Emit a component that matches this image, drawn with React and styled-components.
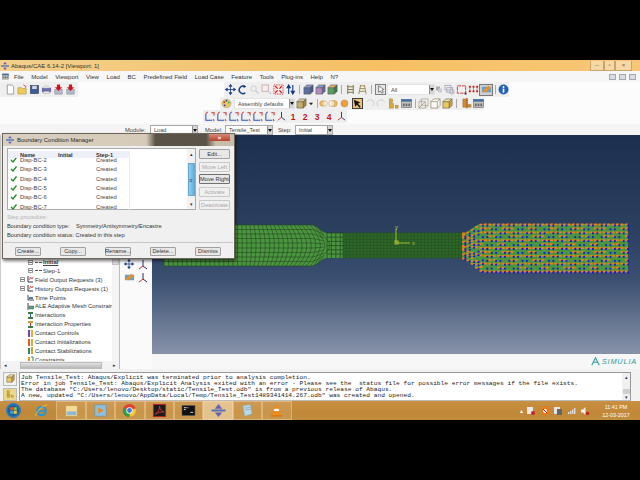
import React from 'react'
import styled, { createGlobalStyle } from 'styled-components'

const Global = createGlobalStyle`
    html, body { margin: 0; padding: 0; background: #000; }
    * { box-sizing: border-box; }
    body { font-family: "Liberation Sans", Arial, sans-serif; font-size: 6px; color: #222; }
`

const Page = styled.div`
    width: 640px;
    height: 480px;
    background: #000;
    padding: 60px 0;
    overflow: hidden;
`
const AppWindow = styled.div`
    position: relative;
    height: 360px;
    display: flex;
    flex-direction: column;
    background: #f2f2f2;
`
const TitleBar = styled.div`
    height: 11px;
    display: flex;
    align-items: center;
    gap: 2px;
    padding-left: 1px;
    background: linear-gradient(90deg, #f4d08c 0%, #f3c574 35%, #f6bf62 60%, #f8c878 100%);
    font-size: 6px;
    color: #3a3020;
`
const Caption = styled.span`
    flex: 1;
`
const CaptionButtons = styled.div`
    display: flex;
    margin-right: 8px;
    height: 10px;
`
const CaptionButton = styled.div`
    width: ${p => p.$w}px;
    border: 1px solid #c9a468;
    border-top: 0;
    background: #f5d8a5;
    display: flex;
    align-items: center;
    justify-content: center;
    color: #6a5a40;
    font-size: 6px;
    line-height: 1;
`
const MenuBar = styled.div`
    height: 11px;
    display: flex;
    align-items: center;
    background: #f6f6f6;
    padding: 0 4px 0 2px;
`
const MenuItems = styled.div`
    flex: 1;
    display: flex;
    gap: 7.6px;
    margin-left: 5px;
    color: #333;
`
const MdiButton = styled.div`
    width: 7px;
    height: 6px;
    margin-left: 3px;
    background: #d8dce4;
    border: 1px solid #a4a8b0;
`
const ToolArea = styled.div`
    height: 41px;
    background: #fcfcfc;
`
const ToolRow = styled.div`
    display: flex;
    height: ${p => p.$h}px;
    align-items: center;
`
const Group = styled.div`
    display: flex;
    align-items: center;
    height: 100%;
    margin-left: ${p => p.$ml || 0}px;
    padding-left: ${p => p.$pl || 0}px;
    padding-right: ${p => p.$pr || 0}px;
    background: #efefef;
`
const Tool = styled.div`
    width: ${p => p.$w || 12}px;
    height: 12px;
    flex: none;
    display: flex;
    align-items: center;
    justify-content: center;
    color: #c11;
    font-size: 8.5px;
    font-weight: bold;
    ${p => p.$on && 'background: #cfcfcf; border: 1px solid #777;'}
`
const Sep = styled.div`
    width: ${p => p.$w || 6}px;
    height: 9px;
    flex: none;
    background: linear-gradient(#aaa, #aaa) center / 1px 100% no-repeat;
`
const Combo = styled.div`
    width: ${p => p.$w}px;
    height: ${p => p.$h || 10}px;
    margin-left: ${p => p.$ml || 0}px;
    flex: none;
    display: flex;
    align-items: center;
    justify-content: space-between;
    padding-left: 3px;
    background: #fff;
    border: 1px solid ${p => p.$line || '#e4e4e4'};
    color: #444;
    font-size: 5.6px;
    white-space: nowrap;
`
const ComboArrow = styled.span`
    width: 5px;
    height: 100%;
    background: #d5d5d5;
    border-left: 1px solid #8f8f8f;
    position: relative;
    &::after {
        content: '';
        position: absolute;
        left: 0;
        top: 3px;
        border: 2px solid transparent;
        border-top: 3px solid #111;
    }
`
const ContextBar = styled.div`
    height: 12px;
    display: flex;
    align-items: center;
    background: #f5f5f5;
    font-size: 5.8px;
    color: #444;
    border-top: 1px solid #fafafa;
`
const BarLabel = styled.span`
    margin-left: ${p => p.$ml}px;
    width: ${p => p.$w}px;
    flex: none;
`
const Main = styled.div`
    height: 234px;
    display: flex;
    background: #f6f6f6;
`
const TreePane = styled.div`
    width: 120px;
    height: 234px;
    flex: none;
    display: flex;
    flex-direction: column;
    background: #fff;
    border-right: 1px solid #bbb;
    border-left: 1px solid #ccc;
`
const TreeBody = styled.div`
    height: 226px;
    flex: none;
    display: flex;
    overflow: hidden;
`
const TreeList = styled.div`
    flex: 1;
    min-width: 0;
    padding-top: 122.6px;
    overflow: hidden;
    white-space: nowrap;
`
const TreeRow = styled.div`
    height: 8.9px;
    display: flex;
    align-items: center;
    padding-left: ${p => (p.$level === 2 ? 27 : 19)}px;
    color: #333;
    font-size: 5.9px;
    text-decoration-color: #333;
`
const Expander = styled.span`
    width: 5px;
    height: 5px;
    flex: none;
    margin-right: 2px;
    border: 1px solid #999;
    background: linear-gradient(#777, #777) center / 3px 1px no-repeat, #fff;
    visibility: ${p => (p.$hide ? 'hidden' : 'visible')};
`
const TreeIcon = styled.span`
    width: 7px;
    height: 7px;
    flex: none;
    display: flex;
    margin-right: 1px;
`
const TreeLabel = styled.span`
    ${p => p.$current && 'text-decoration: underline; font-weight: bold; color: #444;'}
`
const VScroll = styled.div`
    width: 7px;
    flex: none;
    padding-top: 118px;
    background: #f4f4f4;
`
const VThumb = styled.div`
    height: 12px;
    background: #dcdcdc;
    border: 1px solid #c4c4c4;
`
const HScroll = styled.div`
    height: 8px;
    flex: none;
    display: flex;
    align-items: center;
    justify-content: space-between;
    padding: 0 3px;
    background: #f3f3f3;
    color: #333;
    font-size: 5px;
`
const HThumb = styled.div`
    width: 82px;
    height: 7px;
    margin: 0 0 0 1px;
    background: linear-gradient(#e4e4e4, #b8b8b8);
    border: 1px solid #bbb;
`
const ToolBox = styled.div`
    width: 32px;
    flex: none;
    display: grid;
    grid-template-columns: 13px 13px;
    grid-auto-rows: 13px;
    align-content: start;
    justify-content: start;
    gap: 0;
    padding: 124px 0 0 4px;
    background: #fafafa;
`
const Right = styled.div`
    flex: 1;
    display: flex;
    flex-direction: column;
`
const Viewport = styled.div`
    height: 219px;
    flex: none;
    background: linear-gradient(#1d2f4e 0%, #2c4060 45%, #3a4e70 65%, #8692a8 100%);
`
const MeshSvg = styled.svg`
    display: block;
    width: 488px;
    height: 219px;
`
const LogoStrip = styled.div`
    flex: 1;
    display: flex;
    align-items: center;
    justify-content: flex-end;
    gap: 2px;
    padding-right: 3px;
    color: #2b9c9a;
    font-size: 7.4px;
    font-style: italic;
    letter-spacing: 0.8px;
    background: #f7f7f7;
`
const MessageRow = styled.div`
    height: 29px;
    margin-top: 3px;
    display: flex;
    background: #f2f2f2;
`
const MessageTools = styled.div`
    width: 19px;
    flex: none;
    display: flex;
    flex-direction: column;
    gap: 2px;
    padding: 0 2px 0 3px;
`
const MessageTool = styled.div`
    flex: 1;
    border: 1px solid #bbb;
    background: ${p => p.$bg};
    display: flex;
    align-items: center;
    justify-content: center;
    overflow: hidden;
`
const MessageBox = styled.div`
    width: 612px;
    flex: none;
    display: flex;
    background: #fff;
    border: 1px solid #999;
    border-bottom-color: #bbb;
`
const MessageText = styled.pre`
    flex: 1;
    margin: 0;
    padding: 1.5px 0 0 1px;
    font-family: "Liberation Mono", "Courier New", monospace;
    font-size: 6.2px;
    line-height: 6.05px;
    color: #222;
    overflow: hidden;
`
const MsgScroll = styled.div`
    width: 8px;
    flex: none;
    display: flex;
    flex-direction: column;
    align-items: center;
    justify-content: space-between;
    padding-top: 2px;
    background: #f0f0f0;
    color: #333;
    font-size: 4.5px;
`
const MsgThumb = styled.div`
    width: 7px;
    height: 5px;
    margin-top: 7px;
    background: #cfcfcf;
`
const Taskbar = styled.div`
    height: 19px;
    flex: none;
    margin-top: auto;
    display: flex;
    align-items: center;
    background: linear-gradient(#c98f42, #c08837 60%, #c28c3e);
`
const TaskApps = styled.div`
    display: flex;
    flex: 1;
    height: 100%;
`
const TaskApp = styled.div`
    width: ${p => p.$w || 29.4}px;
    height: 100%;
    flex: none;
    display: flex;
    align-items: center;
    justify-content: center;
    ${p => p.$framed && `
        border: 1px solid rgba(255, 235, 200, 0.35);
        background: rgba(255, 240, 210, ${p.$active ? 0.55 : 0.12});
    `}
`
const Tray = styled.div`
    display: flex;
    align-items: center;
    gap: 3.4px;
    margin-right: 8px;
    color: #fff;
`
const Clock = styled.div`
    width: 36px;
    margin-right: 6px;
    text-align: center;
    color: #fff;
    font-size: 5.4px;
    line-height: 8px;
`

const Dialog = styled.div`
    position: absolute;
    left: 2px;
    top: 73px;
    width: 233px;
    height: 126px;
    display: flex;
    flex-direction: column;
    background: #f0f0f0;
    border: 1px solid #6d655a;
    box-shadow: 1px 2px 3px rgba(0, 0, 0, 0.55);
`
const DialogTitle = styled.div`
    height: 12px;
    flex: none;
    display: flex;
    align-items: center;
    gap: 3px;
    padding-left: 3px;
    background: linear-gradient(90deg, #d8cfc0 0%, #d6cbb8 62%, #5b5348 66%, #5b5348 88%, #c9bda8 92%);
    color: #2a2a2a;
    font-size: 5.9px;
`
const DialogCaption = styled.span`
    flex: 1;
`
const CloseButton = styled.div`
    width: 21px;
    height: 7px;
    margin: -5px 4px 0 0;
    display: flex;
    align-items: center;
    justify-content: center;
    background: linear-gradient(#d98a78, #b8402c);
    color: #fff;
    font-size: 6px;
    font-weight: bold;
`
const DialogTop = styled.div`
    display: flex;
    padding: 2px 0 0 4px;
    gap: 3px;
`
const TableBox = styled.div`
    width: 189px;
    height: 62px;
    flex: none;
    display: flex;
    background: #fff;
    border: 1px solid #aaa;
`
const TableMain = styled.div`
    flex: 1;
    min-width: 0;
`
const TableHead = styled.div`
    height: 7px;
    margin-top: 2px;
    width: 122px;
    display: grid;
    grid-template-columns: 10px 38px 38px 36px;
    align-items: center;
    background: #edf0f6;
    font-weight: bold;
    font-size: 5.6px;
    color: #333;
`
const HeadCell = styled.span`
    padding-left: 2px;
`
const TableRows = styled.div`
    height: 52px;
    overflow: hidden;
`
const TableRowList = styled.div`
    margin-top: -2.5px;
`
const TableRow = styled.div`
    height: 9.3px;
    width: 122px;
    display: grid;
    grid-template-columns: 10px 38px 38px 36px;
    align-items: center;
    font-size: 5.8px;
    color: #444;
    border-right: 1px solid #e6ebf3;
`
const Cell = styled.span`
    padding-left: 2px;
    white-space: nowrap;
`
const Check = styled.span`
    display: flex;
    justify-content: center;
`
const TableScroll = styled.div`
    width: 8px;
    margin-left: auto;
    flex: none;
    display: flex;
    flex-direction: column;
    align-items: center;
    justify-content: space-between;
    padding: 3px 0 2px;
    background: #f2f2f2;
    color: #333;
    font-size: 4.5px;
`
const TableThumb = styled.div`
    width: 7px;
    height: 33px;
    display: flex;
    align-items: center;
    justify-content: center;
    background: linear-gradient(90deg, #8fd0f2, #5fb0e2);
    border: 1px solid #6aa6cc;
    color: #335;
    font-size: 5px;
`
const SideButtons = styled.div`
    display: flex;
    flex-direction: column;
    gap: 2.7px;
    padding-top: 1px;
`
const ActionButton = styled.div`
    width: ${p => p.$w}px;
    height: ${p => p.$h}px;
    flex: none;
    display: flex;
    align-items: center;
    justify-content: center;
    background: ${p => (p.$disabled ? '#f0f0f0' : '#e8e8e8')};
    border: 1px solid ${p => (p.$default ? '#707070' : p.$disabled ? '#c8c8c8' : '#a0a0a0')};
    border-radius: 1px;
    color: ${p => (p.$disabled ? '#a8a8a8' : '#333')};
    font-size: 5.7px;
    white-space: nowrap;
`
const InfoBlock = styled.div`
    margin-top: 3px;
    padding: 0 4px;
    display: flex;
    flex-direction: column;
`
const InfoLine = styled.div`
    height: 8.9px;
    display: flex;
    align-items: center;
    color: ${p => (p.$muted ? '#b0b0b0' : '#333')};
    font-size: 5.7px;
    white-space: pre;
`
const Divider = styled.div`
    margin: 2px 1px 0;
    height: 1px;
    background: #c6c6c6;
`
const DialogActions = styled.div`
    display: flex;
    gap: 19px;
    padding: 4px 0 0 12px;
`

const AbaqusMark = ({ size = 8 }) => (
    <svg width={size} height={size} viewBox="0 0 12 12">
        <path d="M6 0 9 3.5H3Z" fill="#6a5fb5" />
        <path d="M6 12 9 8.5H3Z" fill="#6a5fb5" />
        <rect x="0" y="5" width="12" height="2" fill="#4a6fc0" />
    </svg>
)

const cube = (a, b, c) => (
    <g stroke="#555" strokeWidth="0.6">
        <path d="M1 4h7v7H1Z" fill={a} />
        <path d="M1 4l3-3h7l-3 3Z" fill={b} />
        <path d="M8 4l3-3v7l-3 3Z" fill={c} />
    </g>
)
const triad = (
    <g fill="none" strokeWidth="1">
        <path d="M6 1v6" stroke="#236" />
        <path d="M6 7l-4 3" stroke="#c33" />
        <path d="M6 7l4 3" stroke="#236" />
    </g>
)
const csys = (c1, c2) => (
    <g fill="none" strokeWidth="1.1">
        <path d="M2 3v7h7" stroke="#2a55b0" />
        <path d="M2 3l2-2M10 9l1 2" stroke={c1} />
        <path d="M8 2h3v3" stroke={c2} />
    </g>
)

const ICONS = {
    doc: <path d="M2.5 1h5l2 2v8h-7Z" fill="#fff" stroke="#999" />,
    open: <g><path d="M1 4h4l1 1h4v6H1Z" fill="#eec95e" stroke="#a88a30" strokeWidth="0.6" /><path d="M7 1l3 2-1 1" stroke="#d33" fill="none" /></g>,
    save: <g><rect x="1.5" y="1.5" width="9" height="9" fill="#3a5c98" stroke="#223" strokeWidth="0.5" /><rect x="3.5" y="2" width="5" height="3.5" fill="#cfd8e8" /></g>,
    print: <g><rect x="1" y="4" width="10" height="5" fill="#6b6fa8" /><rect x="3" y="1.5" width="6" height="3" fill="#ddd" /><rect x="3" y="8" width="6" height="2.5" fill="#eee" stroke="#888" strokeWidth="0.4" /></g>,
    down: <g><rect x="2" y="6" width="8" height="5" fill="#b4b8c8" stroke="#778" strokeWidth="0.5" /><path d="M4.3 0.5h3.4v3H10L6 7.5 2 3.5h2.3Z" fill="#d0121c" /></g>,
    move: <path d="M6 .5v11M.5 6h11M6 .5 4.5 2.5h3ZM6 11.5 4.5 9.5h3ZM.5 6l2-1.5v3ZM11.5 6l-2-1.5v3Z" stroke="#1c3f8a" fill="#1c3f8a" strokeWidth="0.9" />,
    rotate: <g fill="none"><path d="M9 9.5A4 4 0 1 1 8.5 3" stroke="#123a86" strokeWidth="1.6" /><path d="M7 .8l3.2 2-3 1.6Z" fill="#123a86" /></g>,
    zoom: <g fill="none" stroke="#c8c8d0"><circle cx="5" cy="5" r="3" /><path d="M7.5 7.5l3 3" strokeWidth="1.5" /></g>,
    boxzoom: <g fill="none"><rect x="1" y="1" width="7" height="7" stroke="#d8a8a8" /><path d="M7 7l4 4" stroke="#c8c8d0" strokeWidth="1.4" /></g>,
    fit: <g><rect x="1" y="1" width="10" height="10" fill="#f8e8e8" stroke="#d33" strokeDasharray="1.5 1" /><path d="M2.5 2.5l2.5 2.5M9.5 2.5 7 5M2.5 9.5 5 7M9.5 9.5 7 7" stroke="#c11" strokeWidth="1.3" /></g>,
    flip: <g stroke="#123a86" strokeWidth="1.2" fill="#123a86"><path d="M4 11V2" /><path d="M4 1 2.3 4h3.4Z" /><path d="M8.5 1v9" /><path d="M8.5 11 6.8 8h3.4Z" /></g>,
    cubeBlue: cube('#5c6ea8', '#8c9ac8', '#46588e'),
    cubeMix: cube('#b08cc0', '#8c9ac8', '#7060a0'),
    cubeGreen: cube('#58a060', '#e0b060', '#357a40'),
    ladder: <path d="M3 1v10M9 1v10M3 3h6M3 6h6M3 9h6" stroke="#7a6a38" fill="none" />,
    ladder2: <path d="M4 1 2 11M8 1l2 10M3 5h6M2.5 8h7M4 2h4" stroke="#a08a48" fill="none" />,
    select: <g><rect x=".5" y=".5" width="11" height="11" fill="#e4e4e4" stroke="#777" /><path d="M4 2v7l2-1.5L7.5 10 9 9 7.5 6.8 9.5 6Z" fill="#fff" stroke="#222" strokeWidth="0.6" /></g>,
    fade: <g><rect x="1.5" y="1.5" width="6" height="6" fill="#aaa" /><rect x="4.5" y="4.5" width="6" height="6" fill="#ccc" /></g>,
    layers: <g fill="none" stroke="#aab"><rect x="1" y="1.5" width="6.5" height="5" /><rect x="3" y="4" width="6.5" height="5" /><circle cx="8.5" cy="8.5" r="2.5" /></g>,
    dashRed: <g><rect x="1.5" y="2" width="9" height="8" fill="none" stroke="#c33" strokeDasharray="4 .8" /><rect x="9.5" y="9.5" width="2" height="2" fill="#333" /></g>,
    nodes: <g fill="#c11"><rect x="1" y="2" width="2" height="2" /><rect x="5" y="2" width="2" height="2" /><rect x="9" y="2" width="2" height="2" /><rect x="1" y="7" width="2" height="2" /><rect x="5" y="7" width="2" height="2" /><rect x="9" y="7" width="2" height="2" /><path d="M2 4v3M6 4v3M10 4v3" stroke="#c11" strokeDasharray="1 1" /></g>,
    colorOn: <g><rect x="1" y="3" width="10" height="6" fill="#6aa0c8" /><path d="M1 8 8 2l3 2-6 5Z" fill="#e8902a" /></g>,
    info: <g><circle cx="6" cy="6" r="5.4" fill="#2560b8" /><rect x="5.1" y="5" width="1.8" height="4.5" fill="#fff" /><circle cx="6" cy="3.4" r="1.1" fill="#fff" /></g>,
    palette: <g><ellipse cx="6" cy="6" rx="5" ry="4.6" fill="#e8c868" stroke="#886" strokeWidth="0.4" /><circle cx="3.5" cy="4.5" r="1" fill="#c22" /><circle cx="6" cy="3" r="1" fill="#25a" /><circle cx="8.5" cy="5" r="1" fill="#2a6" /><circle cx="4" cy="8" r="1" fill="#529" /></g>,
    cubeTan: cube('#c8ac68', '#ddc88c', '#a08848'),
    tinyArrow: <path d="M3 5h6L6 8.5Z" fill="#222" />,
    circlesA: <g stroke="#a87c28" strokeWidth="0.5"><circle cx="4.5" cy="6" r="3.6" fill="#f0bc60" /><circle cx="7.5" cy="6" r="3.6" fill="#fff" fillOpacity="0.5" /></g>,
    circlesB: <g stroke="#a87c28" strokeWidth="0.5"><circle cx="7.5" cy="6" r="3.6" fill="#f0bc60" /><circle cx="4.5" cy="6" r="3.6" fill="#fff" fillOpacity="0.6" /></g>,
    circle: <circle cx="6" cy="6" r="3.8" fill="#eda040" stroke="#b87820" strokeWidth="0.5" />,
    pointer: <g><rect x=".5" y=".5" width="11" height="11" fill="#f0c070" stroke="#333" /><path d="M2 2l7 3-2.5 1.2L9.5 9.5 8 10.5 5.4 7.4 3.5 9.5Z" fill="#111" /></g>,
    undo: <path d="M9.5 9A4 4 0 0 0 4 3L2.5 4.5" fill="none" stroke="#ccc" strokeWidth="1" />,
    redo: <path d="M2.5 9A4 4 0 0 1 8 3l1.5 1.5" fill="none" stroke="#ccc" strokeWidth="1" />,
    blocks: <g fill="#d8a838" stroke="#8a6a20" strokeWidth="0.4"><rect x="1.5" y="1" width="3.5" height="4" /><rect x="1.5" y="6" width="4.5" height="5" /><rect x="8" y="8" width="3" height="3" /></g>,
    win: <g><rect x=".5" y="1.5" width="11" height="9" fill="#c8c8b8" stroke="#556" strokeWidth="0.6" /><rect x=".5" y="1.5" width="11" height="2.5" fill="#3a6ea8" /><path d="M2 6h2v3H2ZM5 6h2v3H5ZM8 6h2v3H8Z" fill="#667" /></g>,
    wire: <path d="M1 4h7v7H1ZM1 4l3-3h7v7l-3 3M4 1v7h7M4 8l-3 3M1 11l7-7" fill="none" stroke="#998866" strokeWidth="0.6" />,
    hollow: <path d="M1 4h7v7H1ZM1 4l3-3h7v7l-3 3M8 4l3-3" fill="#fafafa" stroke="#887755" strokeWidth="0.7" />,
    solid: cube('#ecc85c', '#f6de8c', '#caa63c'),
    partCut: <g><path d="M2 1h5v6h4v3H2Z" fill="#c89030" stroke="#775518" strokeWidth="0.4" /><path d="M6.5 0v12" stroke="#c11" strokeDasharray="1.2 .8" /></g>,
    csX: csys('#c33', '#c33'),
    csZ: csys('#2a55b0', '#c33'),
    triad
}

const Icon = ({ name, size = 11 }) => (
    <svg width={size} height={size} viewBox="0 0 12 12">{ICONS[name]}</svg>
)

const tools = list =>
    list.map((name, i) => {
        if (name === '|') return <Sep key={i} />
        return <Tool key={i}><Icon name={name} /></Tool>
    })

// chevron bend on the wide end, flat everywhere else
const profile = x => {
    const s = (a, b) => {
        const t = Math.min(1, Math.max(0, (x - a) / (b - a)))
        return t * t * (3 - 2 * t)
    }
    return 20.5 - 8 * s(312, 327) + 11 * s(462, 482)
}
const centre = x => 245.5 + 2 * Math.min(1, Math.max(0, (x - 462) / 20))

const outline = () => {
    let top = []
    let bottom = []
    for (let x = 164; x <= 628; x += 2) {
        top.push(`${x},${(centre(x) - profile(x)).toFixed(1)}`)
        bottom.unshift(`${x},${(centre(x) + profile(x)).toFixed(1)}`)
    }
    return [...top, ...bottom].join(' ')
}

const WideMesh = () => {
    const cols = []
    for (let x = 164; x < 330; x += 4.6) cols.push(x)
    const rows = [-1, -0.78, -0.56, -0.34, -0.12, 0.12, 0.34, 0.56, 0.78, 1]
    const bend = x => Math.max(0, (x - 240) / 70) * 9
    const vertical = cols.map(x => {
        const pts = rows.map(t => {
            const bx = x - bend(x) * t * t
            return `${bx.toFixed(1)},${(centre(bx) + profile(bx) * t).toFixed(1)}`
        })
        return 'M' + pts.join('L')
    })
    const horizontal = rows.map(t => {
        const pts = []
        for (let x = 164; x <= 327; x += 4) pts.push(`${x},${(centre(x) + profile(x) * t).toFixed(1)}`)
        return 'M' + pts.join('L')
    })
    return <path d={[...vertical, ...horizontal].join('')} stroke="#24481e" strokeWidth="0.6" fill="none" />
}

const NarrowMesh = () => {
    let d = ''
    for (let x = 327; x <= 343; x += 4.4) d += `M${x} 233v25`
    for (let y = 233; y <= 258; y += 4.2) d += `M327 ${y}h16`
    let fine = ''
    for (let x = 343; x <= 462; x += 3.4) fine += `M${x} 233v25`
    for (let y = 233; y <= 258; y += 3.1) fine += `M343 ${y}h119`
    return (
        <>
            <rect x="343" y="233" width="119" height="25" fill="#2f662b" />
            <path d={fine} stroke="#24541f" strokeWidth="0.7" />
            <path d={d} stroke="#1f441a" strokeWidth="0.7" />
        </>
    )
}

const NodeMarks = () => {
    const orange = []
    const blue = []
    const rowCount = 13
    for (let x = 462; x <= 628; x += 4.4) {
        for (let r = 0; r < rowCount; r++) {
            const t = -1 + (2 * r) / (rowCount - 1)
            const y = centre(x) + profile(x) * t
            const wiggle = Math.sin(x * 1.7 + r * 2.1)
            if (r % 2 === 0 || wiggle > 0.1) orange.push(`M${x.toFixed(1)} ${(y - 0.4).toFixed(1)}h3v1.8h-3Z`)
            if ((Math.round(x * 10) + r * 17) % 3 !== 0 || r === rowCount - 1) {
                blue.push(`M${(x + 2.4).toFixed(1)} ${(y + 0.6).toFixed(1)}h1.8v1.8h-1.8Z`)
            }
        }
    }
    return (
        <>
            <path d={orange.join('')} fill="#e8801c" />
            <path d={blue.join('')} fill="#1414e0" />
        </>
    )
}

const Mesh = () => (
    <MeshSvg viewBox="152 135 488 219">
        <polygon points={outline()} fill="#4b9440" />
        <WideMesh />
        <NarrowMesh />
        <NodeMarks />
        <g stroke="#b4c832" strokeWidth="0.9" fill="none">
            <path d="M396 243V229M396 243h14" />
            <rect x="395" y="241" width="3" height="3" />
        </g>
        <text x="395" y="229" fill="#b4c832" fontSize="6" fontFamily="Liberation Sans">y</text>
        <text x="412" y="245" fill="#b4c832" fontSize="6" fontFamily="Liberation Sans">x</text>
    </MeshSvg>
)

const TreeGlyph = ({ kind }) => {
    const glyphs = {
        step: <path d="M0 3.5h3M4 3.5h3" stroke="#555" strokeWidth="1.2" />,
        out: <g><path d="M1 0v6h5" stroke="#334" fill="none" /><path d="M2.5 4l1-3 1.5 2 1-2" stroke="#c33" fill="none" strokeWidth="0.8" /></g>,
        time: <g><path d="M1 1v5h6" stroke="#445" fill="none" /><rect x="2" y="3" width="4" height="2" fill="#5577aa" /></g>,
        ale: <g><path d="M1 0v7" stroke="#445" /><rect x="2" y="3" width="5" height="3" fill="#5a7" stroke="#445" strokeWidth="0.4" /></g>,
        inter: <g><rect x="1" y="0" width="5" height="2" fill="#3a7a4a" /><rect x="1" y="5" width="5" height="2" fill="#3a7a4a" /><path d="M3.5 2v3" stroke="#2a55b0" /></g>,
        prop: <g><rect x="1" y="0" width="5" height="2" fill="#c8a040" /><rect x="1" y="5" width="5" height="2" fill="#3a7a4a" /><path d="M3.5 2v3" stroke="#c33" /></g>,
        control: <g><rect x="1" y="0" width="2" height="7" fill="#7040b0" /><rect x="4" y="0" width="2" height="7" fill="#e0b030" /></g>,
        init: <g><rect x="1" y="0" width="2" height="7" fill="#e06020" /><rect x="4" y="0" width="2" height="7" fill="#d8b040" /></g>,
        stab: <g><rect x="1" y="1" width="2" height="6" fill="#3a8a50" /><rect x="4" y="0" width="2" height="7" fill="#d8a030" /></g>,
        con: <g><rect x="1" y="1" width="2" height="6" fill="#d0a020" /><path d="M4 1h2v6H4" stroke="#384" fill="none" /></g>
    }
    return <TreeIcon><svg width="7" height="7" viewBox="0 0 7 7">{glyphs[kind]}</svg></TreeIcon>
}

const TREE = [
    { label: 'Initial', level: 2, kind: 'step', current: true, open: true },
    { label: 'Step-1', level: 2, kind: 'step', open: true },
    { label: 'Field Output Requests (3)', kind: 'out', open: true },
    { label: 'History Output Requests (1)', kind: 'out', open: true },
    { label: 'Time Points', kind: 'time' },
    { label: 'ALE Adaptive Mesh Constraints', kind: 'ale' },
    { label: 'Interactions', kind: 'inter' },
    { label: 'Interaction Properties', kind: 'prop' },
    { label: 'Contact Controls', kind: 'control' },
    { label: 'Contact Initializations', kind: 'init' },
    { label: 'Contact Stabilizations', kind: 'stab' },
    { label: 'Constraints', kind: 'con' }
]

const CHECK = (
    <svg width="7" height="6" viewBox="0 0 7 6">
        <path d="M1 3l2 2 3.5-4.5" fill="none" stroke="#1e8a2a" strokeWidth="1.3" />
    </svg>
)

const TaskIcon = ({ name }) => {
    const art = {
        start: <g><circle cx="8" cy="8" r="8" fill="#2a78b8" /><circle cx="8" cy="8" r="6" fill="#1c5f9c" /><rect x="4.5" y="4.5" width="3.2" height="3.2" fill="#e8562a" /><rect x="8.3" y="4.5" width="3.2" height="3.2" fill="#8cc63f" /><rect x="4.5" y="8.3" width="3.2" height="3.2" fill="#3aa0e0" /><rect x="8.3" y="8.3" width="3.2" height="3.2" fill="#f8c828" /></g>,
        ie: <g fill="none"><circle cx="8" cy="8.5" r="4.5" stroke="#1f96e0" strokeWidth="2.2" /><path d="M3.5 8.5h9" stroke="#1f96e0" strokeWidth="1.6" /><path d="M2 14c-1-3 6-11 12-12" stroke="#f4c430" strokeWidth="1" /></g>,
        files: <g><rect x="2" y="3" width="12" height="11" fill="#f4dc98" stroke="#b8a060" strokeWidth="0.5" /><rect x="3" y="9" width="10" height="4" fill="#8ab8d8" /></g>,
        media: <g><rect x="2" y="2" width="12" height="12" fill="#8cc0e0" stroke="#5a90b0" strokeWidth="0.6" /><path d="M5.5 4.5 11.5 8l-6 3.5Z" fill="#ea8c20" /></g>,
        chrome: <g><circle cx="8" cy="8" r="7" fill="#dd4433" /><path d="M8 8 14.5 5.5A7 7 0 0 1 8 15Z" fill="#f6c62c" /><path d="M8 8 8 15A7 7 0 0 1 1.6 5Z" fill="#2f9e4a" /><circle cx="8" cy="8" r="3.4" fill="#fff" /><circle cx="8" cy="8" r="2.6" fill="#3a78d8" /></g>,
        acrobat: <g><rect x="1.5" y="1.5" width="13" height="13" fill="#1b1b1b" stroke="#b22" /><path d="M3.5 12c3-2 5-6 4.5-8.5C8.5 7 10 9 13 9.5 10 9.5 6 10 3.5 12Z" fill="none" stroke="#e33" strokeWidth="0.9" /></g>,
        cmd: <g><rect x="1" y="2.5" width="14" height="11" fill="#111" stroke="#777" strokeWidth="0.5" /><path d="M3 5h3M7 5h1M3 7h2M10 10h3" stroke="#ddd" /></g>,
        abaqus: <g><path d="M8 1 12 6H4Z" fill="#6a5fb5" /><path d="M8 15 12 10H4Z" fill="#6a5fb5" /><rect x="0.5" y="7" width="15" height="2" fill="#4a6fc0" /></g>,
        note: <g><path d="M3 3l8-1.5 2 10-8 2.5Z" fill="#b8d8ec" stroke="#7aa" strokeWidth="0.5" /><path d="M5 5.5l6-1M5.5 7.5l6-1" stroke="#88a" strokeWidth="0.5" /></g>,
        vlc: <g><path d="M6.8 2h2.4L13 13H3Z" fill="#f08a18" /><path d="M5.8 6h4.4l.7 2.4H5.1Z" fill="#fff" /><rect x="2" y="13" width="12" height="1.6" fill="#d87810" /></g>
    }
    return <svg width="15" height="15" viewBox="0 0 16 16">{art[name]}</svg>
}

const TrayIcon = ({ kind }) => {
    const art = {
        flag: <g><rect x="1" y="1" width="6" height="7" fill="#e8e8e8" /><circle cx="7" cy="7" r="2" fill="#c22" /></g>,
        av: <g><circle cx="5" cy="5" r="4.5" fill="#e8781c" /><circle cx="5" cy="5" r="2" fill="#fff" /><path d="M3 3l4 4" stroke="#c11" /></g>,
        doc: <g><rect x="1" y="1" width="6" height="7" fill="#e4e4e4" /><rect x="4" y="3" width="5" height="6" fill="#666" /></g>,
        net: <g fill="#ddd"><rect x="1" y="6" width="1.4" height="2" /><rect x="3" y="5" width="1.4" height="3" /><rect x="5" y="3.5" width="1.4" height="4.5" /><rect x="7" y="2" width="1.4" height="6" /></g>,
        vol: <g><path d="M1 3.5h2l2.5-2.5v8L3 6.5H1Z" fill="#eee" /><circle cx="7.5" cy="7.5" r="1.8" fill="#c22" /></g>
    }
    return <svg width="10" height="10" viewBox="0 0 10 10">{art[kind]}</svg>
}

const App = () => (
    <Page>
        <Global />
        <AppWindow>
            <TitleBar>
                <AbaqusMark />
                <Caption>Abaqus/CAE 6.14-2 [Viewport: 1]</Caption>
                <CaptionButtons>
                    <CaptionButton $w={14}>–</CaptionButton>
                    <CaptionButton $w={11}>▫</CaptionButton>
                    <CaptionButton $w={17}>×</CaptionButton>
                </CaptionButtons>
            </TitleBar>
            <MenuBar>
                <Icon name="win" size={7} />
                <MenuItems>
                    {['File', 'Model', 'Viewport', 'View', 'Load', 'BC', 'Predefined Field', 'Load Case', 'Feature', 'Tools', 'Plug-ins', 'Help', 'N?'].map(m => (
                        <span key={m}>{m}</span>
                    ))}
                </MenuItems>
                <MdiButton />
                <MdiButton />
                <MdiButton />
            </MenuBar>
            <ToolArea>
                <ToolRow $h={15}>
                    <Group $pl={4} $pr={2}>{tools(['doc', 'open', 'save', 'print', 'down', 'down'])}</Group>
                    <Group $ml={146}>
                        {tools(['move', 'rotate', 'zoom', 'boxzoom', 'fit', 'flip', '|', 'cubeBlue', 'cubeMix', 'cubeGreen', '|', 'ladder', 'ladder2'])}
                        <Sep />
                        <Tool><Icon name="select" /></Tool>
                        <Combo $w={48} $h={11} $ml={1}>All<ComboArrow /></Combo>
                        <Tool $w={8}><Icon name="fade" size={9} /></Tool>
                        {tools(['layers', 'dashRed', 'nodes'])}
                        <Tool $w={14} $on><Icon name="colorOn" /></Tool>
                        <Sep $w={4} />
                        <Tool><Icon name="info" /></Tool>
                    </Group>
                </ToolRow>
                <ToolRow $h={13}>
                    <Group $ml={220}>
                        <Tool $w={12}><Icon name="palette" /></Tool>
                        <Combo $w={61} $h={11} $ml={2}>Assembly defaults<ComboArrow /></Combo>
                        <Tool $w={12}><Icon name="cubeTan" /></Tool>
                        <Tool $w={8}><Icon name="tinyArrow" size={9} /></Tool>
                        <Sep $w={4} />
                        <Tool $w={9}><Icon name="circlesA" /></Tool>
                        <Tool $w={10}><Icon name="circlesB" /></Tool>
                        <Tool $w={13}><Icon name="circle" /></Tool>
                        <Tool $w={12}><Icon name="pointer" /></Tool>
                        {tools(['undo', 'redo', 'blocks'])}
                        <Tool $w={14}><Icon name="win" /></Tool>
                        <Sep $w={4} />
                        {tools(['wire', 'hollow', 'solid'])}
                        <Sep $w={7} />
                        {tools(['partCut', 'win'])}
                    </Group>
                </ToolRow>
                <ToolRow $h={13}>
                    <Group $ml={203}>
                        {tools(['csX', 'csX', 'csZ', 'csX', 'csX', 'csZ', 'triad'])}
                        <Tool>1</Tool>
                        <Tool>2</Tool>
                        <Tool>3</Tool>
                        <Tool>4</Tool>
                        <Tool><Icon name="triad" /></Tool>
                    </Group>
                </ToolRow>
            </ToolArea>
            <ContextBar>
                <BarLabel $ml={125} $w={25}>Module:</BarLabel>
                <Combo $w={48} $line="#a8a8a8">Load<ComboArrow /></Combo>
                <BarLabel $ml={7} $w={20}>Model:</BarLabel>
                <Combo $w={48} $line="#a8a8a8">Tensile_Test<ComboArrow /></Combo>
                <BarLabel $ml={5} $w={17}>Step:</BarLabel>
                <Combo $w={38} $line="#a8a8a8">Initial<ComboArrow /></Combo>
            </ContextBar>
            <Main>
                <TreePane>
                    <TreeBody>
                        <TreeList>
                            {TREE.map(row => (
                                <TreeRow key={row.label} $level={row.level}>
                                    <Expander $hide={!row.open} />
                                    <TreeGlyph kind={row.kind} />
                                    <TreeLabel $current={row.current}>{row.label}</TreeLabel>
                                </TreeRow>
                            ))}
                        </TreeList>
                        <VScroll><VThumb /></VScroll>
                    </TreeBody>
                    <HScroll>
                        <span>◂</span>
                        <HThumb />
                        <span>▸</span>
                    </HScroll>
                </TreePane>
                <ToolBox>
                    <Icon name="move" size={10} />
                    <Icon name="triad" size={12} />
                    <Icon name="colorOn" size={11} />
                    <Icon name="triad" size={12} />
                </ToolBox>
                <Right>
                    <Viewport><Mesh /></Viewport>
                    <LogoStrip>
                        <svg width="9" height="9" viewBox="0 0 12 12">
                            <path d="M1 11 6 1l5 10M3 7h6" fill="none" stroke="#2b9c9a" strokeWidth="1.4" />
                        </svg>
                        SIMULIA
                    </LogoStrip>
                </Right>
            </Main>
            <MessageRow>
                <MessageTools>
                    <MessageTool $bg="#f2f2f2"><Icon name="solid" size={9} /></MessageTool>
                    <MessageTool $bg="#ecd98c"><Icon name="blocks" size={8} /></MessageTool>
                </MessageTools>
                <MessageBox>
                    <MessageText>{`Job Tensile_Test: Abaqus/Explicit was terminated prior to analysis completion.
Error in job Tensile_Test: Abaqus/Explicit Analysis exited with an error - Please see the  status file for possible error messages if the file exists.
The database "C:/Users/lenovo/Desktop/static/Tensile_Test.odb" is from a previous release of Abaqus.
A new, updated "C:/Users/lenovo/AppData/Local/Temp/Tensile_Test1489341414.267.odb" was created and opened.`}</MessageText>
                    <MsgScroll>
                        <span>▴</span>
                        <MsgThumb />
                        <span>▾</span>
                    </MsgScroll>
                </MessageBox>
            </MessageRow>
            <Taskbar>
                <TaskApps>
                    <TaskApp $w={27}><TaskIcon name="start" /></TaskApp>
                    <TaskApp><TaskIcon name="ie" /></TaskApp>
                    <TaskApp $framed><TaskIcon name="files" /></TaskApp>
                    <TaskApp $framed><TaskIcon name="media" /></TaskApp>
                    <TaskApp $framed><TaskIcon name="chrome" /></TaskApp>
                    <TaskApp $framed><TaskIcon name="acrobat" /></TaskApp>
                    <TaskApp $framed><TaskIcon name="cmd" /></TaskApp>
                    <TaskApp $framed $active><TaskIcon name="abaqus" /></TaskApp>
                    <TaskApp $framed><TaskIcon name="note" /></TaskApp>
                    <TaskApp $framed><TaskIcon name="vlc" /></TaskApp>
                </TaskApps>
                <Tray>
                    <span>▴</span>
                    <TrayIcon kind="flag" />
                    <TrayIcon kind="av" />
                    <TrayIcon kind="doc" />
                    <TrayIcon kind="net" />
                    <TrayIcon kind="vol" />
                </Tray>
                <Clock>11:41 PM<br />12-03-2017</Clock>
            </Taskbar>
            <Dialog>
                <DialogTitle>
                    <AbaqusMark />
                    <DialogCaption>Boundary Condition Manager</DialogCaption>
                    <CloseButton>×</CloseButton>
                </DialogTitle>
                <DialogTop>
                    <TableBox>
                        <TableMain>
                            <TableHead>
                                <span />
                                <HeadCell>Name</HeadCell>
                                <HeadCell>Initial</HeadCell>
                                <HeadCell>Step-1</HeadCell>
                            </TableHead>
                            <TableRows>
                                <TableRowList>
                                    {[2, 3, 4, 5, 6, 7].map(n => (
                                        <TableRow key={n}>
                                            <Check>{CHECK}</Check>
                                            <Cell>Disp-BC-{n}</Cell>
                                            <span />
                                            <Cell>Created</Cell>
                                        </TableRow>
                                    ))}
                                </TableRowList>
                            </TableRows>
                        </TableMain>
                        <TableScroll>
                            <span>▴</span>
                            <TableThumb>≡</TableThumb>
                            <span>▾</span>
                        </TableScroll>
                    </TableBox>
                    <SideButtons>
                        <ActionButton $w={31} $h={10}>Edit...</ActionButton>
                        <ActionButton $w={31} $h={10} $disabled>Move Left</ActionButton>
                        <ActionButton $w={31} $h={10} $default>Move Right</ActionButton>
                        <ActionButton $w={31} $h={10} $disabled>Activate</ActionButton>
                        <ActionButton $w={31} $h={10} $disabled>Deactivate</ActionButton>
                    </SideButtons>
                </DialogTop>
                <InfoBlock>
                    <InfoLine $muted>Step procedure:</InfoLine>
                    <InfoLine>Boundary condition type:    Symmetry/Antisymmetry/Encastre</InfoLine>
                    <InfoLine>Boundary condition status: Created in this step</InfoLine>
                </InfoBlock>
                <Divider />
                <DialogActions>
                    {['Create...', 'Copy...', 'Rename...', 'Delete...', 'Dismiss'].map(b => (
                        <ActionButton key={b} $w={26} $h={9}>{b}</ActionButton>
                    ))}
                </DialogActions>
            </Dialog>
        </AppWindow>
    </Page>
)

export default App
